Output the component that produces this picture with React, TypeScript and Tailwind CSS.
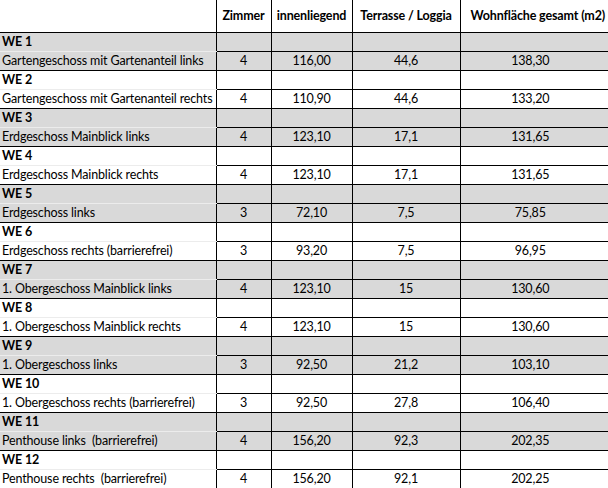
const units = [
  { we: 'WE 1', label: 'Gartengeschoss mit Gartenanteil links', rooms: '4', inner: '116,00', terrace: '44,6', total: '138,30' },
  { we: 'WE 2', label: 'Gartengeschoss mit Gartenanteil rechts', rooms: '4', inner: '110,90', terrace: '44,6', total: '133,20' },
  { we: 'WE 3', label: 'Erdgeschoss Mainblick links', rooms: '4', inner: '123,10', terrace: '17,1', total: '131,65' },
  { we: 'WE 4', label: 'Erdgeschoss Mainblick rechts', rooms: '4', inner: '123,10', terrace: '17,1', total: '131,65' },
  { we: 'WE 5', label: 'Erdgeschoss links', rooms: '3', inner: '72,10', terrace: '7,5', total: '75,85' },
  { we: 'WE 6', label: 'Erdgeschoss rechts (barrierefrei)', rooms: '3', inner: '93,20', terrace: '7,5', total: '96,95' },
  { we: 'WE 7', label: '1. Obergeschoss Mainblick links', rooms: '4', inner: '123,10', terrace: '15', total: '130,60' },
  { we: 'WE 8', label: '1. Obergeschoss Mainblick rechts', rooms: '4', inner: '123,10', terrace: '15', total: '130,60' },
  { we: 'WE 9', label: '1. Obergeschoss links', rooms: '3', inner: '92,50', terrace: '21,2', total: '103,10' },
  { we: 'WE 10', label: '1. Obergeschoss rechts (barrierefrei)', rooms: '3', inner: '92,50', terrace: '27,8', total: '106,40' },
  { we: 'WE 11', label: 'Penthouse links  (barrierefrei)', rooms: '4', inner: '156,20', terrace: '92,3', total: '202,35' },
  { we: 'WE 12', label: 'Penthouse rechts  (barrierefrei)', rooms: '4', inner: '156,20', terrace: '92,1', total: '202,25' },
]

function UnitRows({ unit, shaded }: { unit: (typeof units)[number]; shaded: boolean }) {
  const bg = shaded ? 'bg-[#d9d9d9]' : 'bg-white'
  const num = 'h-[19px] border-b border-l border-black p-0 text-center'
  const tail = 'h-[19px] border-b border-black p-0'
  return (
    <>
      <tr className={bg}>
        <td className="h-[19px] border-b border-[#ececec] p-0 pl-[2px] font-bold">{unit.we}</td>
        <td className={num}></td>
        <td className={num}></td>
        <td className={num}></td>
        <td className={num}></td>
        <td className={tail}></td>
      </tr>
      <tr className={bg}>
        <td className="h-[19px] border-b border-black p-0 pl-[2px] whitespace-pre">{unit.label}</td>
        <td className={num}>{unit.rooms}</td>
        <td className={num}>{unit.inner}</td>
        <td className={num}>{unit.terrace}</td>
        <td className={num}>{unit.total}</td>
        <td className={tail}></td>
      </tr>
    </>
  )
}

export default function App() {
  return (
    <div className="h-[488px] w-[608px] overflow-hidden bg-white text-black">
      <table
        className="w-[608px] table-fixed border-collapse text-[12.5px] leading-[18px] tracking-[-0.15px]"
        style={{ fontFamily: 'Lato, "Liberation Sans", sans-serif' }}
      >
        <colgroup>
          <col className="w-[216px]" />
          <col className="w-[55px]" />
          <col className="w-[81px]" />
          <col className="w-[108px]" />
          <col className="w-[140px]" />
          <col className="w-[8px]" />
        </colgroup>
        <thead>
          <tr className="font-bold whitespace-nowrap">
            <th className="h-[32px] border-b border-black p-0"></th>
            <th className="h-[32px] border-b border-l border-black p-0 text-center">Zimmer</th>
            <th className="h-[32px] border-b border-l border-black p-0 text-center">innenliegend</th>
            <th className="h-[32px] border-b border-l border-black p-0 text-center">Terrasse / Loggia</th>
            <th className="h-[32px] border-b border-l border-black p-0 pl-[10px] text-left">
              Wohnfläche gesamt (m2)
            </th>
            <th className="h-[32px] border-b border-black p-0"></th>
          </tr>
        </thead>
        <tbody>
          {units.map((unit, index) => (
            <UnitRows key={unit.we} unit={unit} shaded={index % 2 === 0} />
          ))}
        </tbody>
      </table>
    </div>
  )
}
